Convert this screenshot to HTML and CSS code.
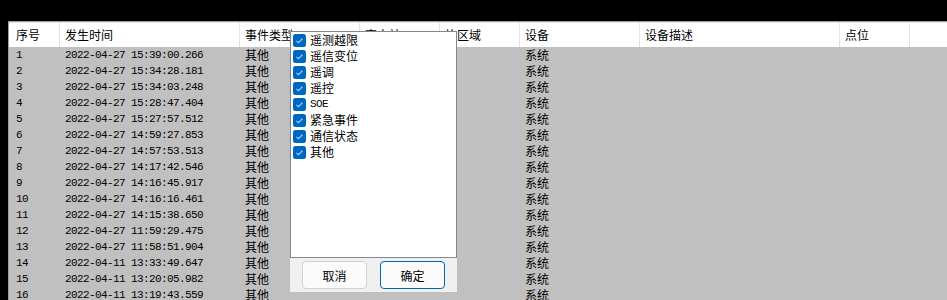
FILE: index.html
```html
<!DOCTYPE html>
<html lang="zh-CN">
<head>
<meta charset="utf-8">
<title>事件列表</title>
<link rel="stylesheet" href="styles.css">
</head>
<body>
<div class="screen">
  <div class="grid">
    <div class="row head">
      <div class="c c1">序号</div>
      <div class="c">发生时间</div>
      <div class="c">事件类型</div>
      <div class="c">变电站</div>
      <div class="c">片区域</div>
      <div class="c">设备</div>
      <div class="c">设备描述</div>
      <div class="c">点位</div>
      <div class="c last"></div>
    </div>
    <div class="body">
      <div class="row"><div class="c c1 mono">1</div><div class="c mono">2022-04-27 15:39:00.266</div><div class="c">其他</div><div class="c"></div><div class="c"></div><div class="c">系统</div><div class="c"></div><div class="c"></div><div class="c"></div></div>
      <div class="row"><div class="c c1 mono">2</div><div class="c mono">2022-04-27 15:34:28.181</div><div class="c">其他</div><div class="c"></div><div class="c"></div><div class="c">系统</div><div class="c"></div><div class="c"></div><div class="c"></div></div>
      <div class="row"><div class="c c1 mono">3</div><div class="c mono">2022-04-27 15:34:03.248</div><div class="c">其他</div><div class="c"></div><div class="c"></div><div class="c">系统</div><div class="c"></div><div class="c"></div><div class="c"></div></div>
      <div class="row"><div class="c c1 mono">4</div><div class="c mono">2022-04-27 15:28:47.404</div><div class="c">其他</div><div class="c"></div><div class="c"></div><div class="c">系统</div><div class="c"></div><div class="c"></div><div class="c"></div></div>
      <div class="row"><div class="c c1 mono">5</div><div class="c mono">2022-04-27 15:27:57.512</div><div class="c">其他</div><div class="c"></div><div class="c"></div><div class="c">系统</div><div class="c"></div><div class="c"></div><div class="c"></div></div>
      <div class="row"><div class="c c1 mono">6</div><div class="c mono">2022-04-27 14:59:27.853</div><div class="c">其他</div><div class="c"></div><div class="c"></div><div class="c">系统</div><div class="c"></div><div class="c"></div><div class="c"></div></div>
      <div class="row"><div class="c c1 mono">7</div><div class="c mono">2022-04-27 14:57:53.513</div><div class="c">其他</div><div class="c"></div><div class="c"></div><div class="c">系统</div><div class="c"></div><div class="c"></div><div class="c"></div></div>
      <div class="row"><div class="c c1 mono">8</div><div class="c mono">2022-04-27 14:17:42.546</div><div class="c">其他</div><div class="c"></div><div class="c"></div><div class="c">系统</div><div class="c"></div><div class="c"></div><div class="c"></div></div>
      <div class="row"><div class="c c1 mono">9</div><div class="c mono">2022-04-27 14:16:45.917</div><div class="c">其他</div><div class="c"></div><div class="c"></div><div class="c">系统</div><div class="c"></div><div class="c"></div><div class="c"></div></div>
      <div class="row"><div class="c c1 mono">10</div><div class="c mono">2022-04-27 14:16:16.461</div><div class="c">其他</div><div class="c"></div><div class="c"></div><div class="c">系统</div><div class="c"></div><div class="c"></div><div class="c"></div></div>
      <div class="row"><div class="c c1 mono">11</div><div class="c mono">2022-04-27 14:15:38.650</div><div class="c">其他</div><div class="c"></div><div class="c"></div><div class="c">系统</div><div class="c"></div><div class="c"></div><div class="c"></div></div>
      <div class="row"><div class="c c1 mono">12</div><div class="c mono">2022-04-27 11:59:29.475</div><div class="c">其他</div><div class="c"></div><div class="c"></div><div class="c">系统</div><div class="c"></div><div class="c"></div><div class="c"></div></div>
      <div class="row"><div class="c c1 mono">13</div><div class="c mono">2022-04-27 11:58:51.904</div><div class="c">其他</div><div class="c"></div><div class="c"></div><div class="c">系统</div><div class="c"></div><div class="c"></div><div class="c"></div></div>
      <div class="row"><div class="c c1 mono">14</div><div class="c mono">2022-04-11 13:33:49.647</div><div class="c">其他</div><div class="c"></div><div class="c"></div><div class="c">系统</div><div class="c"></div><div class="c"></div><div class="c"></div></div>
      <div class="row"><div class="c c1 mono">15</div><div class="c mono">2022-04-11 13:20:05.982</div><div class="c">其他</div><div class="c"></div><div class="c"></div><div class="c">系统</div><div class="c"></div><div class="c"></div><div class="c"></div></div>
      <div class="row"><div class="c c1 mono">16</div><div class="c mono">2022-04-11 13:19:43.559</div><div class="c">其他</div><div class="c"></div><div class="c"></div><div class="c">系统</div><div class="c"></div><div class="c"></div><div class="c"></div></div>
    </div>
  </div>

  <div class="popup">
    <div class="list">
      <label class="item"><span class="cb"><svg width="13" height="13" viewBox="0 0 13 13"><rect x="0" y="0" width="13" height="13" rx="2.5" fill="#0067c0"/><polyline points="3.5,6.8 5.5,8.8 9.5,4.6" fill="none" stroke="#bcd8f2" stroke-width="1.1"/></svg></span><span>遥测越限</span></label>
      <label class="item"><span class="cb"><svg width="13" height="13" viewBox="0 0 13 13"><rect x="0" y="0" width="13" height="13" rx="2.5" fill="#0067c0"/><polyline points="3.5,6.8 5.5,8.8 9.5,4.6" fill="none" stroke="#bcd8f2" stroke-width="1.1"/></svg></span><span>遥信变位</span></label>
      <label class="item"><span class="cb"><svg width="13" height="13" viewBox="0 0 13 13"><rect x="0" y="0" width="13" height="13" rx="2.5" fill="#0067c0"/><polyline points="3.5,6.8 5.5,8.8 9.5,4.6" fill="none" stroke="#bcd8f2" stroke-width="1.1"/></svg></span><span>遥调</span></label>
      <label class="item"><span class="cb"><svg width="13" height="13" viewBox="0 0 13 13"><rect x="0" y="0" width="13" height="13" rx="2.5" fill="#0067c0"/><polyline points="3.5,6.8 5.5,8.8 9.5,4.6" fill="none" stroke="#bcd8f2" stroke-width="1.1"/></svg></span><span>遥控</span></label>
      <label class="item"><span class="cb"><svg width="13" height="13" viewBox="0 0 13 13"><rect x="0" y="0" width="13" height="13" rx="2.5" fill="#0067c0"/><polyline points="3.5,6.8 5.5,8.8 9.5,4.6" fill="none" stroke="#bcd8f2" stroke-width="1.1"/></svg></span><span class="mono">SOE</span></label>
      <label class="item"><span class="cb"><svg width="13" height="13" viewBox="0 0 13 13"><rect x="0" y="0" width="13" height="13" rx="2.5" fill="#0067c0"/><polyline points="3.5,6.8 5.5,8.8 9.5,4.6" fill="none" stroke="#bcd8f2" stroke-width="1.1"/></svg></span><span>紧急事件</span></label>
      <label class="item"><span class="cb"><svg width="13" height="13" viewBox="0 0 13 13"><rect x="0" y="0" width="13" height="13" rx="2.5" fill="#0067c0"/><polyline points="3.5,6.8 5.5,8.8 9.5,4.6" fill="none" stroke="#bcd8f2" stroke-width="1.1"/></svg></span><span>通信状态</span></label>
      <label class="item"><span class="cb"><svg width="13" height="13" viewBox="0 0 13 13"><rect x="0" y="0" width="13" height="13" rx="2.5" fill="#0067c0"/><polyline points="3.5,6.8 5.5,8.8 9.5,4.6" fill="none" stroke="#bcd8f2" stroke-width="1.1"/></svg></span><span>其他</span></label>
    </div>
    <div class="footer">
      <button class="btn">取消</button>
      <button class="btn primary">确定</button>
    </div>
  </div>
</div>
</body>
</html>
```

FILE: styles.css
```css
* { box-sizing: border-box; }
html, body {
  margin: 0;
  padding: 0;
  background: #000;
}
body {
  font-family: "Noto Sans CJK SC", "Noto Sans", sans-serif;
  font-size: 12px;
  color: #000;
}
.screen {
  position: relative;
  width: 947px;
  height: 300px;
  overflow: hidden;
  padding-top: 21px;
  padding-left: 8px;
}
.grid {
  border-top: 1px solid #a0a0a0;
  border-left: 1px solid #a0a0a0;
  background: #c0c0c0;
  height: 279px;
}
.row {
  display: grid;
  grid-template-columns: 51px 180px 120px 80px 80px 120px 200px 70px 1fr;
  height: 16px;
  line-height: 16px;
}
.row.head {
  height: 25px;
  line-height: 23px;
  background: #fff;
  border-top: 1px solid #e6e6e6;
}
.head .c {
  border-right: 1px solid #e3e3e3;
}
.head .c.last { border-right: none; }
.c {
  padding-left: 5px;
  white-space: nowrap;
  overflow: hidden;
}
.c.c1 { padding-left: 7px; }
.mono {
  font-family: "Liberation Mono", "DejaVu Sans Mono", monospace;
  font-size: 11px;
  letter-spacing: -0.6px;
}

.popup {
  position: absolute;
  left: 290px;
  top: 31px;
  width: 167px;
  background: #f0f0f0;
}
.list {
  height: 227px;
  background: #fff;
  border: 1px solid #828790;
  padding: 0 0 0 2px;
  display: flex;
  flex-direction: column;
}
.item {
  display: flex;
  align-items: center;
  gap: 4px;
  height: 16px;
  line-height: 16px;
}
.cb {
  display: flex;
  width: 13px;
  height: 13px;
}
.footer {
  height: 34px;
  display: flex;
  gap: 13px;
  padding: 3px 0 0 12px;
}
.btn {
  width: 65px;
  height: 28px;
  border: 1px solid #d1d1d1;
  border-radius: 4px;
  background: #fbfbfb;
  font-family: "Noto Sans CJK SC", sans-serif;
  font-size: 12px;
  color: #000;
  padding: 0;
}
.btn.primary {
  border: 1px solid #0067c0;
}
```
